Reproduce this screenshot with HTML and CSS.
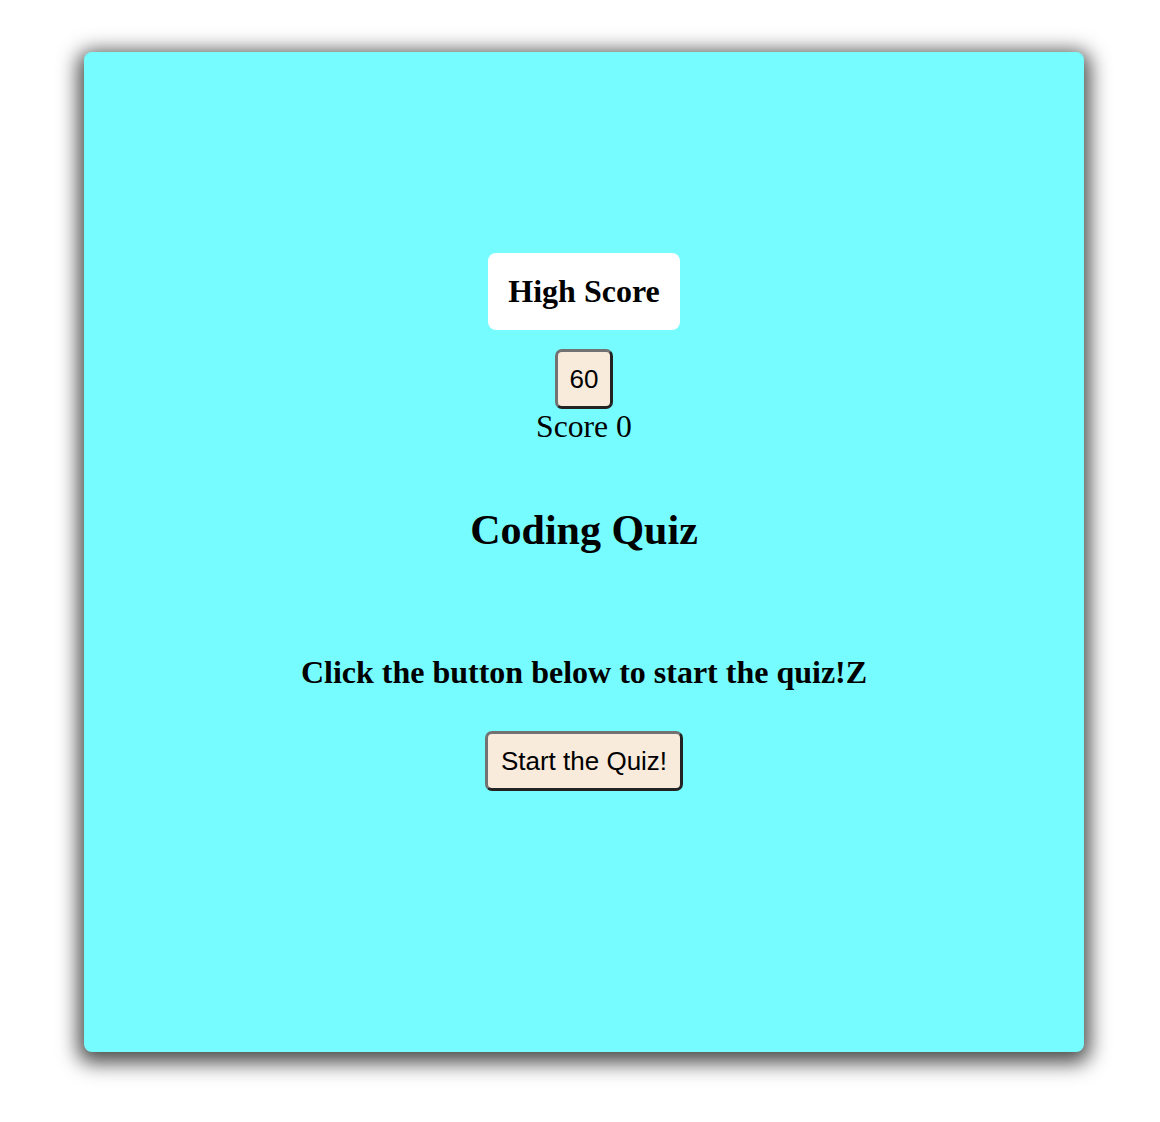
FILE: index.html
```html
<!DOCTYPE html>
<html lang="en">
<head>
<meta charset="utf-8">
<title>Coding Quiz</title>
<link rel="stylesheet" href="styles.css">
</head>
<body>
<main class="card">
  <div class="high-score">High Score</div>
  <button class="timer" type="button">60</button>
  <div class="score">Score 0</div>
  <h1 class="title">Coding Quiz</h1>
  <p class="intro">Click the button below to start the quiz!Z</p>
  <button class="start" type="button">Start the Quiz!</button>
</main>
</body>
</html>
```
FILE: styles.css
```css
html, body {
  margin: 0;
  padding: 0;
  background: #ffffff;
}

body {
  font-family: "Liberation Serif", "Times New Roman", serif;
  color: #000;
  padding-bottom: 70px;
}

.card {
  box-sizing: border-box;
  width: 1000px;
  height: 1000px;
  margin: 52px 0 0 84px;
  background: #76fcfe;
  border-radius: 8px;
  box-shadow: 0 5px 20px 6px rgba(0, 0, 0, 0.7);
  display: flex;
  flex-direction: column;
  align-items: center;
  padding-top: 201px;
}

.high-score {
  background: #ffffff;
  border-radius: 8px;
  padding: 20px;
  font-size: 32px;
  font-weight: bold;
  line-height: 36.8px;
}

.timer,
.start {
  font-family: "Liberation Sans", Arial, sans-serif;
  font-size: 26px;
  line-height: 30px;
  color: #000;
  background: #f8ebdb;
  border-style: solid;
  border-width: 3px;
  border-color: #727272 #232323 #232323 #727272;
  border-radius: 7px;
  padding: 12px 13px;
  margin: 0;
}

.timer {
  margin-top: 19px;
  padding: 12px 12px;
}

.score {
  font-size: 31.7px;
  line-height: 36.8px;
}

.title {
  margin: 60px 0 0;
  font-size: 42px;
  line-height: 48px;
  font-weight: bold;
}

.intro {
  margin: 100px 0 0;
  font-size: 32px;
  line-height: 37px;
  font-weight: bold;
}

.start {
  margin-top: 40px;
}
```
